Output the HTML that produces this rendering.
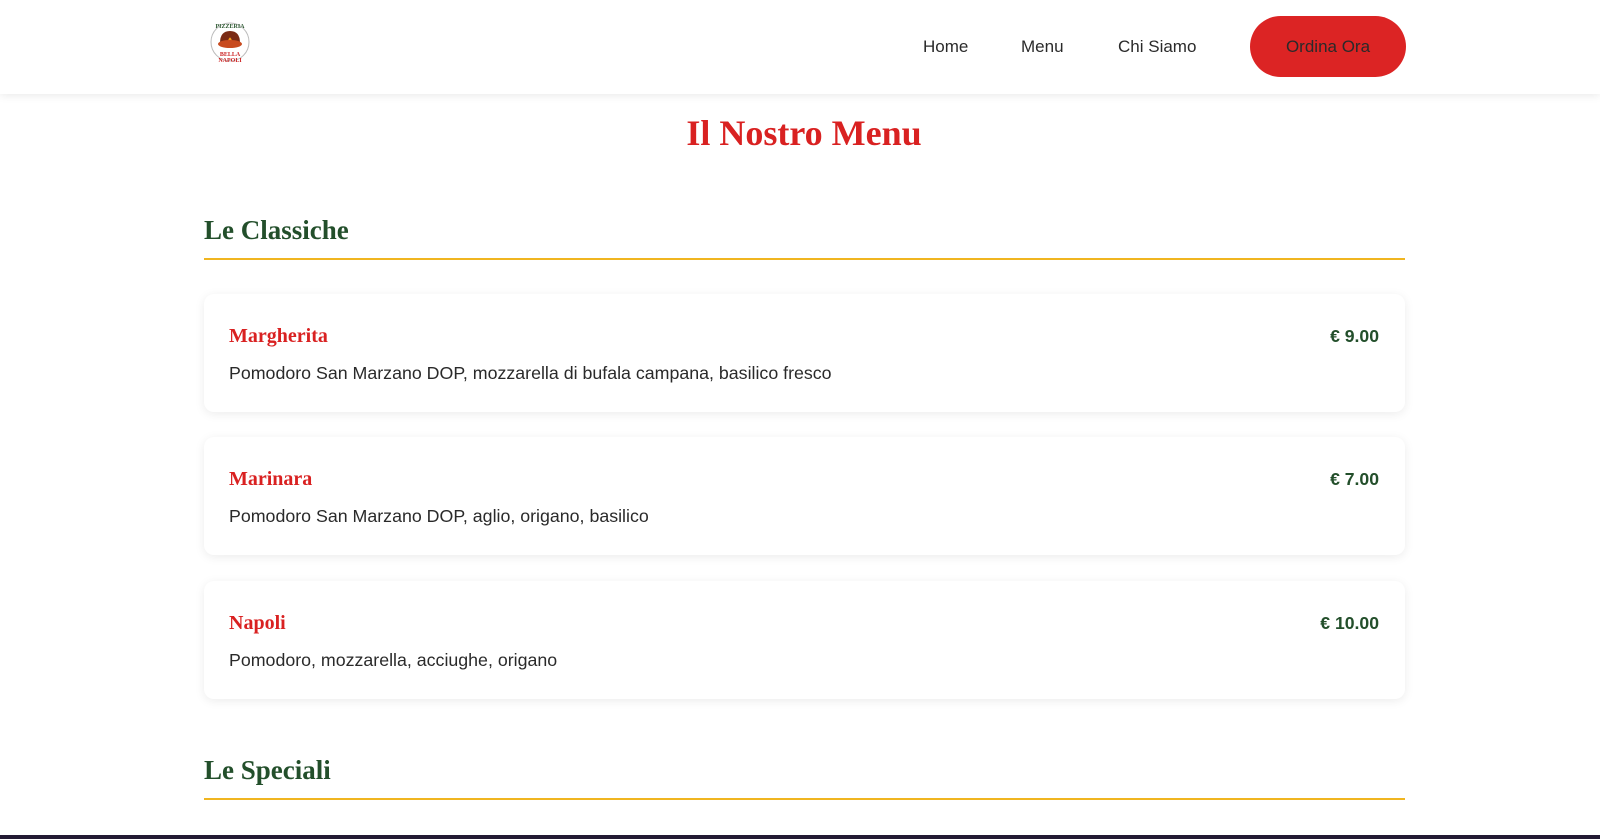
<!DOCTYPE html>
<html><head><meta charset="utf-8"><style>
*{margin:0;padding:0;box-sizing:border-box}
body{width:1600px;height:839px;overflow:hidden;background:#fff;font-family:"Liberation Sans",sans-serif;position:relative}
header{position:absolute;top:0;left:0;width:1600px;height:94px;background:#fff;box-shadow:0 2px 8px rgba(0,0,0,.08);z-index:2}
.logo{position:absolute;left:210px;top:19px;width:40px;height:46px}
nav a{position:absolute;top:37px;font-size:17px;color:#2a2a2a;text-decoration:none}
.btn{position:absolute;left:1250px;top:16px;width:156px;height:61px;border-radius:31px;background:#dc2424;color:#2a2a2a;font-size:17px;text-align:center;line-height:61px}
h1{position:absolute;top:112px;left:0;width:1608px;text-align:center;font-family:"Liberation Serif",serif;font-weight:bold;font-size:36px;color:#d92121}
h2{position:absolute;left:204px;font-family:"Liberation Serif",serif;font-weight:bold;font-size:27px;color:#234f2b}
.line{position:absolute;left:204px;width:1201px;height:2px;background:#f0b520}
.card{position:absolute;left:204px;width:1201px;height:118px;background:#fff;border-radius:10px;box-shadow:0 2px 10px rgba(0,0,0,.08)}
.card .n{position:absolute;left:25px;top:31px;font-family:"Liberation Serif",serif;font-weight:bold;font-size:20px;color:#d92121}
.card .p{position:absolute;right:26px;top:32px;font-weight:bold;font-size:17.6px;color:#234f2b}
.card .d{position:absolute;left:25px;top:69px;font-size:17.8px;color:#2a2a2a}
.foot{position:absolute;left:0;top:835px;width:1600px;height:4px;background:#231a33}
</style></head><body>
<header>
<svg class="logo" viewBox="0 0 40 46">
<circle cx="20" cy="23" r="19" fill="none" stroke="#bbb" stroke-width="1"/>
<text x="20" y="9" font-size="6" text-anchor="middle" fill="#2f5a33" font-family="Liberation Serif" font-weight="bold">PIZZERIA</text>
<path d="M10 24 Q10 12 20 12 Q30 12 30 24Z" fill="#7a2a14"/>
<path d="M18 22 Q20 15 22 22Z" fill="#f29a1c"/>
<ellipse cx="20" cy="25" rx="12" ry="4" fill="#c84a1e"/>
<text x="20" y="37" font-size="6" text-anchor="middle" fill="#c22" font-family="Liberation Serif" font-weight="bold">BELLA</text>
<text x="20" y="43" font-size="6" text-anchor="middle" fill="#c22" font-family="Liberation Serif" font-weight="bold">NAPOLI</text>
</svg>
<nav><a style="left:923px">Home</a><a style="left:1021px">Menu</a><a style="left:1118px">Chi Siamo</a></nav>
<div class="btn">Ordina Ora</div>
</header>
<h1>Il Nostro Menu</h1>
<h2 style="top:215px">Le Classiche</h2>
<div class="line" style="top:258px"></div>
<div class="card" style="top:294px"><div class="n">Margherita</div><div class="p">€ 9.00</div><div class="d">Pomodoro San Marzano DOP, mozzarella di bufala campana, basilico fresco</div></div>
<div class="card" style="top:437px"><div class="n">Marinara</div><div class="p">€ 7.00</div><div class="d">Pomodoro San Marzano DOP, aglio, origano, basilico</div></div>
<div class="card" style="top:581px"><div class="n">Napoli</div><div class="p">€ 10.00</div><div class="d">Pomodoro, mozzarella, acciughe, origano</div></div>
<h2 style="top:755px">Le Speciali</h2>
<div class="line" style="top:798px"></div>
<div class="foot"></div>
</body></html>
